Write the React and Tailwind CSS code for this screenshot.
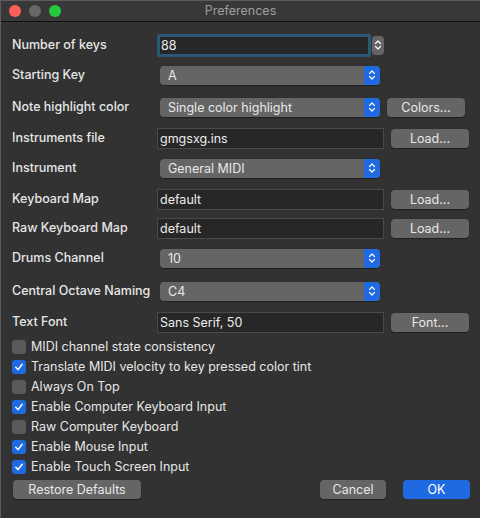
import { useState } from "react";

const font = { fontFamily: '"Inter", "Liberation Sans", sans-serif' };

function Chevrons({ className = "" }) {
  return (
    <svg width="8" height="12" viewBox="0 0 8 12" className={className}>
      <path d="M1.5 4.5 L4 2 L6.5 4.5" fill="none" stroke="white" strokeWidth="1.2" strokeLinecap="round" strokeLinejoin="round" />
      <path d="M1.5 7.5 L4 10 L6.5 7.5" fill="none" stroke="white" strokeWidth="1.2" strokeLinecap="round" strokeLinejoin="round" />
    </svg>
  );
}

function Select({ value }) {
  return (
    <div className="ml-[3px] flex h-[19px] w-[220px] items-stretch rounded-[4px] bg-[#656565] shadow-[0_0.5px_1px_rgba(0,0,0,0.4)]">
      <span className="flex-1 pl-[8px] text-[12.5px] leading-[19px] text-[#e8e8e8]">{value}</span>
      <span className="flex w-[16px] items-center justify-center rounded-r-[4px] bg-[#1f6ae0]">
        <Chevrons />
      </span>
    </div>
  );
}

function TextField({ value }) {
  return (
    <div className="h-[21px] w-[227px] border border-[#4a4a4a] bg-[#272727] pl-[2px] text-[12.5px] leading-[19px] text-[#ececec]">
      {value}
    </div>
  );
}

function Button({ children, className = "" }) {
  return (
    <button
      className={`h-[19px] rounded-[4px] bg-[#656565] text-[12.5px] leading-[19px] text-[#e8e8e8] shadow-[0_0.5px_1px_rgba(0,0,0,0.4)] ${className}`}
    >
      {children}
    </button>
  );
}

const rows = [
  { label: "Number of keys", h: "h-[30px]", kind: "spin", value: "88" },
  { label: "Starting Key", h: "h-[30px]", kind: "select", value: "A" },
  { label: "Note highlight color", h: "h-[34px]", kind: "select", value: "Single color highlight", btn: "Colors..." },
  { label: "Instruments file", h: "h-[28px]", kind: "text", value: "gmgsxg.ins", btn: "Load..." },
  { label: "Instrument", h: "h-[32px]", kind: "select", value: "General MIDI" },
  { label: "Keyboard Map", h: "h-[30px]", kind: "text", value: "default", btn: "Load..." },
  { label: "Raw Keyboard Map", h: "h-[28px]", kind: "text", value: "default", btn: "Load..." },
  { label: "Drums Channel", h: "h-[32px]", kind: "select", value: "10" },
  { label: "Central Octave Naming", h: "h-[34px]", kind: "select", value: "C4" },
  { label: "Text Font", h: "h-[28px]", kind: "text", value: "Sans Serif, 50", btn: "Font..." },
];

const checks = [
  ["MIDI channel state consistency", false],
  ["Translate MIDI velocity to key pressed color tint", true],
  ["Always On Top", false],
  ["Enable Computer Keyboard Input", true],
  ["Raw Computer Keyboard", false],
  ["Enable Mouse Input", true],
  ["Enable Touch Screen Input", true],
];

function Check({ checked }) {
  return checked ? (
    <span className="flex h-[14px] w-[14px] items-center justify-center rounded-[3px] bg-[#1f6ae0]">
      <svg width="10" height="10" viewBox="0 0 10 10">
        <path d="M1.8 5.2 L4 7.6 L8.2 2.2" fill="none" stroke="white" strokeWidth="1.5" strokeLinecap="round" strokeLinejoin="round" />
      </svg>
    </span>
  ) : (
    <span className="h-[14px] w-[14px] rounded-[3px] bg-[#5a5a5a]" />
  );
}

export default function App() {
  const [state] = useState(checks);

  return (
    <div style={font} className="h-[518px] w-[480px] overflow-hidden bg-[#323232] select-none">
      <div className="flex h-[518px] flex-col border-l border-t border-[#5c5c5c]">
        {/* title bar */}
        <div className="relative flex h-[21px] items-center border-b border-[#111] bg-[#383838]">
          <div className="flex gap-[8px] pl-[8px]">
            <span className="h-[12px] w-[12px] rounded-full bg-[#fe5f57]" />
            <span className="h-[12px] w-[12px] rounded-full bg-[#676767]" />
            <span className="h-[12px] w-[12px] rounded-full bg-[#27c93f]" />
          </div>
          <div className="absolute inset-0 flex items-center justify-center text-[12.5px] text-[#9e9e9e]">
            Preferences
          </div>
        </div>

        <div className="pt-[8px]">
          {rows.map((r) => (
            <div key={r.label} className={`flex items-center ${r.h}`}>
              <span className="w-[156px] pl-[11px] text-[12.5px] font-medium text-[#e6e6e6]">{r.label}</span>
              {r.kind === "spin" && (
                <div className="flex items-center">
                  <div className="h-[23px] w-[214px] rounded-[2px] border-[3px] border-[#2c5877] bg-[#272727] pl-[1px] text-[12.5px] leading-[17px] text-[#ececec]">
                    {r.value}
                  </div>
                  <span className="ml-[1px] flex h-[19px] w-[12px] items-center justify-center rounded-[4px] bg-[#656565]">
                    <Chevrons />
                  </span>
                </div>
              )}
              {r.kind === "select" && <Select value={r.value} />}
              {r.kind === "text" && <TextField value={r.value} />}
              {r.btn && <Button className="ml-[7px] w-[78px]">{r.btn}</Button>}
            </div>
          ))}
        </div>

        <div className="pl-[11px] pt-[1px]">
          {state.map(([label, on]) => (
            <div key={label} className="flex h-[20px] items-center gap-[5px]">
              <Check checked={on} />
              <span className="text-[12.5px] text-[#e6e6e6]">{label}</span>
            </div>
          ))}
        </div>

        <div className="mt-[3px] flex items-center pl-[12px] pr-[10px]">
          <Button className="w-[128px]">Restore Defaults</Button>
          <Button className="ml-auto w-[66px]">Cancel</Button>
          <button className="ml-[17px] h-[19px] w-[67px] rounded-[4px] bg-[#1f6ae0] text-[12.5px] leading-[19px] text-white">
            OK
          </button>
        </div>
      </div>
    </div>
  );
}
